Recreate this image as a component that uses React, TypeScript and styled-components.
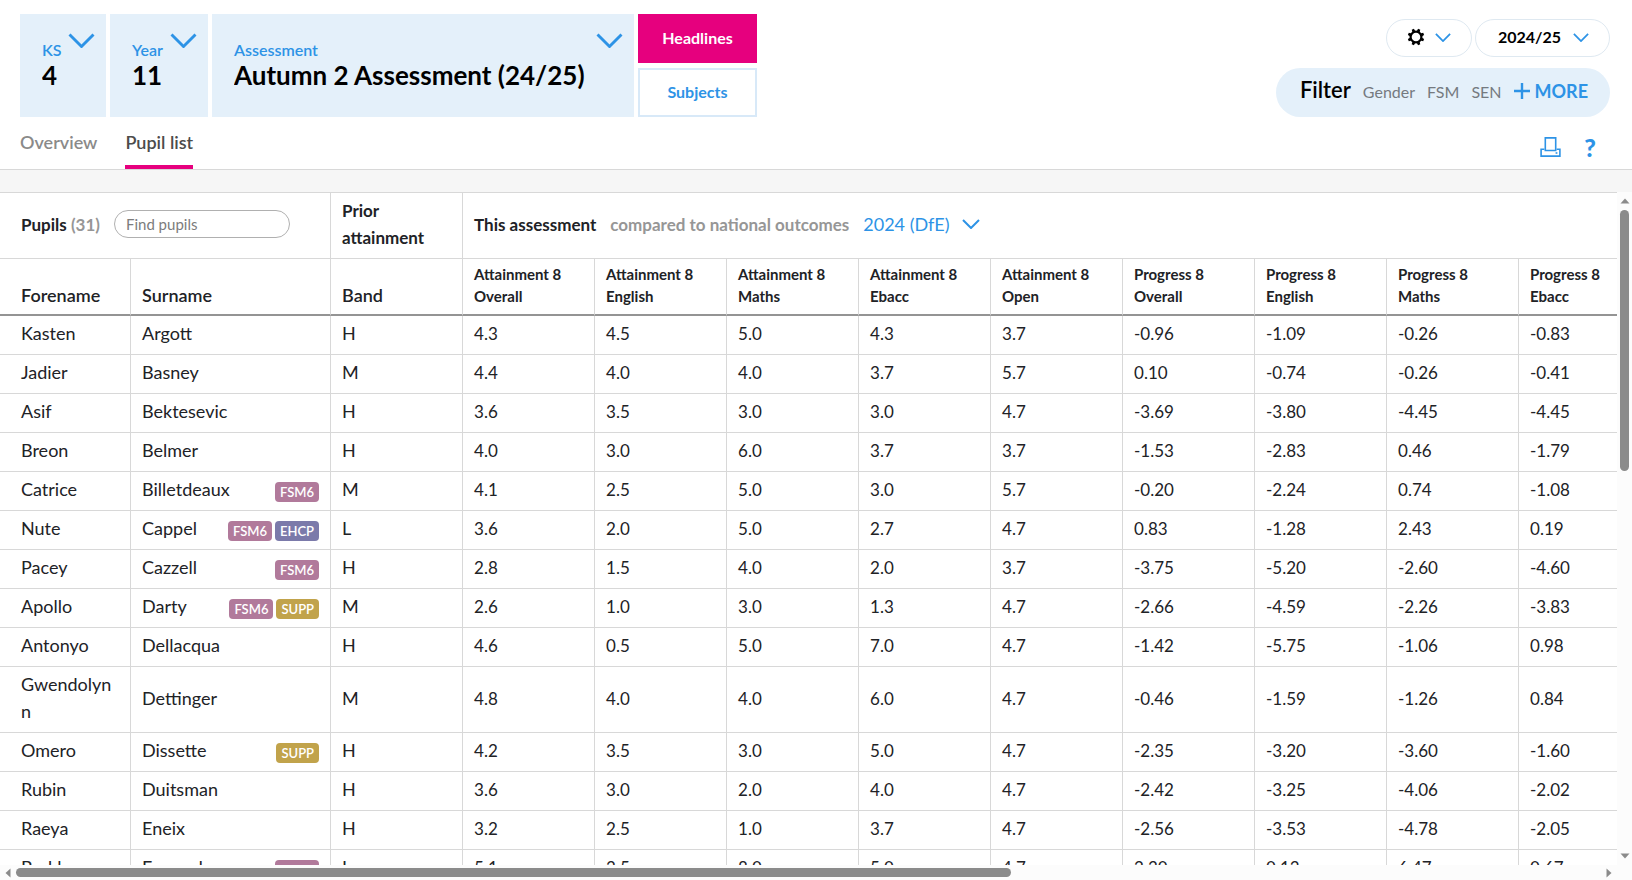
import React from 'react';
import styled, { createGlobalStyle } from 'styled-components';

const color = {
  blue: '#2d93e6',
  paleBlue: '#e4f0fa',
  pink: '#e6007e',
  text: '#212226',
  muted: '#969696',
  line: '#d8d8d8',
  scroll: '#8b8b8b',
};

const GlobalStyle = createGlobalStyle`
  *, *::before, *::after { box-sizing: border-box; }
  body { margin: 0; background: #fff; }
  body, button, input, select {
    font-family: Lato, "Liberation Sans", sans-serif;
    color: ${color.text};
  }
  button { cursor: pointer; }
`;

const Page = styled.div`
  display: flex;
  flex-direction: column;
  height: 100vh;
  overflow: hidden;
`;

const Header = styled.header`
  padding: 14px 22px 0 20px;
  border-bottom: 1px solid ${color.line};
`;

const TopRow = styled.div`
  display: flex;
  justify-content: space-between;
  align-items: stretch;
`;

const Pickers = styled.div`
  display: flex;
  gap: 4px;
`;

const PickerPanel = styled.label<{ $minWidth: number }>`
  display: flex;
  justify-content: space-between;
  gap: 6px;
  min-width: ${p => p.$minWidth}px;
  min-height: 103px;
  padding: 0 11px 0 22px;
  background: ${color.paleBlue};
  cursor: pointer;
  > svg { margin-top: 19px; }
`;

const PickerText = styled.span`
  display: flex;
  flex-direction: column;
  align-items: flex-start;
  padding-top: 26px;
`;

const PickerLabel = styled.span`
  font-size: 16px;
  font-weight: 600;
  line-height: 20px;
  color: ${color.blue};
`;

const PickerSelect = styled.select`
  appearance: none;
  margin: 0;
  padding: 0;
  border: 0;
  background: none;
  font-size: 26px;
  font-weight: 700;
  line-height: 30px;
  color: #000;
`;

const ViewSwitch = styled.div`
  display: flex;
  flex-direction: column;
  gap: 5px;
  width: 119px;
`;

const ViewButton = styled.button<{ $active?: boolean }>`
  flex: 1;
  padding: 0 6px 2px;
  border: 2px solid ${p => (p.$active ? color.pink : '#d8e9f8')};
  background: ${p => (p.$active ? color.pink : '#fff')};
  color: ${p => (p.$active ? '#fff' : color.blue)};
  font-size: 16px;
  font-weight: 700;
`;

const Tools = styled.div`
  display: flex;
  flex-direction: column;
  align-items: flex-end;
  justify-content: space-between;
  padding-top: 5px;
`;

const PillRow = styled.div`
  display: flex;
  gap: 3px;
`;

const pill = `
  display: flex;
  align-items: center;
  height: 38px;
  border: 1px solid #dfe9f1;
  border-radius: 19px;
  background: #fff;
`;

const SettingsButton = styled.button`
  ${pill}
  gap: 10px;
  padding: 0 20px 2px;
`;

const YearPill = styled.label`
  ${pill}
  gap: 11px;
  padding: 0 20px 2px 22px;
  cursor: pointer;
`;

const YearSelect = styled.select`
  appearance: none;
  margin: 0;
  padding: 0;
  border: 0;
  background: none;
  font-size: 16px;
  font-weight: 700;
  line-height: 20px;
  color: #000;
`;

const FilterBar = styled.div`
  display: flex;
  align-items: baseline;
  gap: 12px;
  height: 49px;
  padding: 7px 22px 0 24px;
  border-radius: 25px;
  background: ${color.paleBlue};
`;

const FilterTitle = styled.span`
  font-size: 22px;
  font-weight: 600;
  line-height: 30px;
  color: #000;
`;

const FilterOption = styled.button`
  padding: 0;
  border: 0;
  background: none;
  font-size: 16px;
  color: #757a80;
`;

const MoreButton = styled.button`
  display: flex;
  align-items: baseline;
  gap: 5px;
  padding: 0;
  border: 0;
  background: none;
  font-size: 18px;
  font-weight: 700;
  color: ${color.blue};
`;

const TabRow = styled.div`
  display: flex;
  justify-content: space-between;
  align-items: flex-end;
`;

const Tabs = styled.nav`
  display: flex;
  gap: 28px;
`;

const Tab = styled.a<{ $active?: boolean }>`
  padding: 13px 0 11px;
  border-bottom: 4px solid ${p => (p.$active ? color.pink : 'transparent')};
  font-size: 18px;
  font-weight: 600;
  line-height: 24px;
  color: ${p => (p.$active ? '#4c4c4c' : '#8a8a8a')};
  text-decoration: none;
`;

const PageActions = styled.div`
  display: flex;
  align-items: center;
  gap: 23px;
  padding: 0 14px 10px 0;
`;

const IconButton = styled.button`
  display: flex;
  padding: 0;
  border: 0;
  background: none;
  font-size: 25px;
  font-weight: 900;
  line-height: 24px;
  color: ${color.blue};
`;

const Band = styled.div`
  flex: none;
  height: 22px;
  background: #f6f6f6;
`;

const ScrollPanel = styled.main`
  flex: 1;
  min-height: 0;
  display: grid;
  grid-template-columns: minmax(0, 1fr) 15px;
  grid-template-rows: minmax(0, 1fr) 15px;
  background: #fcfcfc;
`;

const TableViewport = styled.div`
  overflow: auto;
  scrollbar-width: none;
  border-top: 1px solid ${color.line};
  background: #fff;
`;

const Track = styled.div<{ $vertical?: boolean }>`
  display: flex;
  flex-direction: ${p => (p.$vertical ? 'column' : 'row')};
  align-items: center;
`;

const TrackRun = styled.div<{ $vertical?: boolean }>`
  flex: 1;
  align-self: stretch;
  display: flex;
  flex-direction: ${p => (p.$vertical ? 'column' : 'row')};
  align-items: center;
`;

const Thumb = styled.div<{ $vertical?: boolean; $share: number }>`
  width: ${p => (p.$vertical ? '9px' : `${p.$share}%`)};
  height: ${p => (p.$vertical ? `${p.$share}%` : '9px')};
  border-radius: 5px;
  background: ${color.scroll};
`;

const ArrowBox = styled.span<{ $length: number }>`
  flex: none;
  display: flex;
  align-items: center;
  justify-content: center;
  width: ${p => p.$length}px;
  height: ${p => p.$length}px;
`;

const Grid = styled.table`
  width: 1651px;
  table-layout: fixed;
  border-collapse: separate;
  border-spacing: 0;
  font-size: 18px;
  line-height: 27px;
`;

const Col = styled.col<{ $width: number }>`
  width: ${p => p.$width}px;
`;

const GroupCell = styled.th`
  padding: 4px 11px 7px;
  border-right: 1px solid ${color.line};
  border-bottom: 1px solid ${color.line};
  font-size: 17px;
  font-weight: 700;
  text-align: left;
  vertical-align: middle;
  &:first-child { padding-left: 21px; }
`;

const GroupContent = styled.div`
  display: flex;
  align-items: center;
  gap: 14px;
`;

const Muted = styled.span`
  color: ${color.muted};
`;

const SearchInput = styled.input`
  width: 176px;
  height: 28px;
  padding: 0 11px;
  border: 1px solid #b0b0b0;
  border-radius: 14px;
  background: #fff;
  font-size: 15px;
  &::placeholder { color: #7c7c7c; opacity: 1; }
`;

const OutcomePicker = styled.label`
  display: flex;
  align-items: center;
  gap: 12px;
  cursor: pointer;
`;

const OutcomeSelect = styled.select`
  appearance: none;
  margin: 0;
  padding: 0;
  border: 0;
  background: none;
  font-size: 18px;
  line-height: 27px;
  color: ${color.blue};
`;

const HeadCell = styled.th<{ $small?: boolean }>`
  padding: 4px 11px ${p => (p.$small ? 7 : 8)}px;
  border-right: 1px solid ${color.line};
  border-bottom: 2px solid #949494;
  font-size: ${p => (p.$small ? 15 : 18)}px;
  font-weight: ${p => (p.$small ? 700 : 600)};
  line-height: 22px;
  text-align: left;
  vertical-align: bottom;
  &:first-child { padding-left: 21px; }
`;

const Cell = styled.td`
  padding: 4px 11px 7px;
  border-right: 1px solid ${color.line};
  border-bottom: 1px solid ${color.line};
  vertical-align: middle;
  overflow-wrap: anywhere;
  &:first-child { padding: 4px 14px 7px 21px; }
`;

const ScoreCell = styled(Cell)`
  font-size: 17px;
`;

const NameLine = styled.div`
  display: flex;
  justify-content: space-between;
  align-items: flex-end;
`;

const Chips = styled.span`
  display: flex;
  gap: 3px;
  padding-bottom: 1px;
`;

type ChipKind = 'FSM6' | 'EHCP' | 'SUPP';
const chipColor: Record<ChipKind, string> = { FSM6: '#b17a9b', EHCP: '#7b7aaa', SUPP: '#c1a34b' };

const Chip = styled.span<{ $kind: ChipKind }>`
  height: 20px;
  padding: 0 5px;
  border-radius: 4px;
  background: ${p => chipColor[p.$kind]};
  color: #fff;
  font-size: 13px;
  font-weight: 600;
  line-height: 20px;
`;

const Chevron = ({ size = 16, stroke = 2 }: { size?: number; stroke?: number }) => (
  <svg width={size} height={Math.round((size * 5) / 9)} viewBox="0 0 18 10" fill="none" aria-hidden="true">
    <path d="M1 1l8 8 8-8" stroke={color.blue} strokeWidth={stroke} />
  </svg>
);

const GearIcon = () => (
  <svg width="18" height="18" viewBox="0 0 18 18" fill="none" stroke="#000" aria-hidden="true">
    <circle cx="9" cy="9" r="5.4" strokeWidth="2.2" />
    {[22.5, 67.5, 112.5, 157.5, 202.5, 247.5, 292.5, 337.5].map(a => (
      <path key={a} d="M7.4 3.6L7.8 .7h2.4l.4 2.9z" fill="#000" stroke="none" transform={`rotate(${a} 9 9)`} />
    ))}
  </svg>
);

const PlusIcon = () => (
  <svg width="16" height="14" viewBox="0 0 16 14" overflow="visible" stroke={color.blue} strokeWidth="2.4" aria-hidden="true">
    <path d="M8 -1v16M0 7h16" />
  </svg>
);

const PrinterIcon = () => (
  <svg width="21" height="20" viewBox="0 0 21 20" fill="none" stroke={color.blue} strokeWidth="1.6" aria-hidden="true">
    <path d="M5.3 .9h10.4v12.6H5.3z" />
    <path d="M4.4 12.2H1.1v6.9h18.8v-6.9h-3.3" />
    <path d="M15.6 16h1.8" />
  </svg>
);

const Arrow = ({ turn, length }: { turn: number; length: number }) => (
  <ArrowBox $length={length}>
    <svg width="10" height="10" viewBox="0 0 10 10" aria-hidden="true">
      <path d="M5 2.5L9.5 7.5h-9z" fill={color.scroll} transform={`rotate(${turn} 5 5)`} />
    </svg>
  </ArrowBox>
);

const Picker = ({ label, value, minWidth }: { label: string; value: string; minWidth: number }) => (
  <PickerPanel $minWidth={minWidth}>
    <PickerText>
      <PickerLabel>{label}</PickerLabel>
      <PickerSelect defaultValue={value}>
        <option>{value}</option>
      </PickerSelect>
    </PickerText>
    <Chevron size={27} stroke={1.9} />
  </PickerPanel>
);

const scoreColumns = [
  ['Attainment 8', 'Overall'],
  ['Attainment 8', 'English'],
  ['Attainment 8', 'Maths'],
  ['Attainment 8', 'Ebacc'],
  ['Attainment 8', 'Open'],
  ['Progress 8', 'Overall'],
  ['Progress 8', 'English'],
  ['Progress 8', 'Maths'],
  ['Progress 8', 'Ebacc'],
];

type Pupil = [forename: string, surname: string, chips: ChipKind[], band: string, scores: string];

const pupils: Pupil[] = [
  ['Kasten', 'Argott', [], 'H', '4.3 4.5 5.0 4.3 3.7 -0.96 -1.09 -0.26 -0.83'],
  ['Jadier', 'Basney', [], 'M', '4.4 4.0 4.0 3.7 5.7 0.10 -0.74 -0.26 -0.41'],
  ['Asif', 'Bektesevic', [], 'H', '3.6 3.5 3.0 3.0 4.7 -3.69 -3.80 -4.45 -4.45'],
  ['Breon', 'Belmer', [], 'H', '4.0 3.0 6.0 3.7 3.7 -1.53 -2.83 0.46 -1.79'],
  ['Catrice', 'Billetdeaux', ['FSM6'], 'M', '4.1 2.5 5.0 3.0 5.7 -0.20 -2.24 0.74 -1.08'],
  ['Nute', 'Cappel', ['FSM6', 'EHCP'], 'L', '3.6 2.0 5.0 2.7 4.7 0.83 -1.28 2.43 0.19'],
  ['Pacey', 'Cazzell', ['FSM6'], 'H', '2.8 1.5 4.0 2.0 3.7 -3.75 -5.20 -2.60 -4.60'],
  ['Apollo', 'Darty', ['FSM6', 'SUPP'], 'M', '2.6 1.0 3.0 1.3 4.7 -2.66 -4.59 -2.26 -3.83'],
  ['Antonyo', 'Dellacqua', [], 'H', '4.6 0.5 5.0 7.0 4.7 -1.42 -5.75 -1.06 0.98'],
  ['Gwendolynn', 'Dettinger', [], 'M', '4.8 4.0 4.0 6.0 4.7 -0.46 -1.59 -1.26 0.84'],
  ['Omero', 'Dissette', ['SUPP'], 'H', '4.2 3.5 3.0 5.0 4.7 -2.35 -3.20 -3.60 -1.60'],
  ['Rubin', 'Duitsman', [], 'H', '3.6 3.0 2.0 4.0 4.7 -2.42 -3.25 -4.06 -2.02'],
  ['Raeya', 'Eneix', [], 'H', '3.2 2.5 1.0 3.7 4.7 -2.56 -3.53 -4.78 -2.05'],
  ['Barkley', 'Ferrand', ['FSM6'], 'L', '5.1 3.5 8.0 5.0 4.7 2.30 0.13 6.47 0.67'],
];

export default function App() {
  return (
    <>
      <GlobalStyle />
      <Page>
        <Header>
          <TopRow>
            <Pickers>
              <Picker label="KS" value="4" minWidth={86} />
              <Picker label="Year" value="11" minWidth={98} />
              <Picker label="Assessment" value="Autumn 2 Assessment (24/25)" minWidth={422} />
              <ViewSwitch>
                <ViewButton type="button" $active>Headlines</ViewButton>
                <ViewButton type="button">Subjects</ViewButton>
              </ViewSwitch>
            </Pickers>
            <Tools>
              <PillRow>
                <SettingsButton type="button" aria-label="Settings">
                  <GearIcon />
                  <Chevron />
                </SettingsButton>
                <YearPill>
                  <YearSelect aria-label="Academic year" defaultValue="2024/25">
                    <option>2024/25</option>
                  </YearSelect>
                  <Chevron />
                </YearPill>
              </PillRow>
              <FilterBar>
                <FilterTitle>Filter</FilterTitle>
                <FilterOption type="button">Gender</FilterOption>
                <FilterOption type="button">FSM</FilterOption>
                <FilterOption type="button">SEN</FilterOption>
                <MoreButton type="button">
                  <PlusIcon />
                  MORE
                </MoreButton>
              </FilterBar>
            </Tools>
          </TopRow>
          <TabRow>
            <Tabs>
              <Tab href="#overview">Overview</Tab>
              <Tab href="#pupils" $active aria-current="page">Pupil list</Tab>
            </Tabs>
            <PageActions>
              <IconButton type="button" aria-label="Print">
                <PrinterIcon />
              </IconButton>
              <IconButton type="button" aria-label="Help">?</IconButton>
            </PageActions>
          </TabRow>
        </Header>
        <Band />
        <ScrollPanel>
          <TableViewport>
            <Grid>
              <colgroup>
                <Col $width={131} />
                <Col $width={200} />
                <Col $width={132} />
                {scoreColumns.map(c => (
                  <Col key={c.join()} $width={132} />
                ))}
              </colgroup>
              <thead>
                <tr>
                  <GroupCell colSpan={2}>
                    <GroupContent>
                      <span>
                        Pupils <Muted>(31)</Muted>
                      </span>
                      <SearchInput type="search" aria-label="Find pupils" placeholder="Find pupils" />
                    </GroupContent>
                  </GroupCell>
                  <GroupCell>Prior attainment</GroupCell>
                  <GroupCell colSpan={scoreColumns.length}>
                    <GroupContent>
                      <span>This assessment</span>
                      <Muted>compared to national outcomes</Muted>
                      <OutcomePicker>
                        <OutcomeSelect aria-label="National outcomes" defaultValue="2024 (DfE)">
                          <option>2024 (DfE)</option>
                        </OutcomeSelect>
                        <Chevron size={18} />
                      </OutcomePicker>
                    </GroupContent>
                  </GroupCell>
                </tr>
                <tr>
                  <HeadCell>Forename</HeadCell>
                  <HeadCell>Surname</HeadCell>
                  <HeadCell>Band</HeadCell>
                  {scoreColumns.map(([measure, subject]) => (
                    <HeadCell key={measure + subject} $small>
                      {measure}
                      <br />
                      {subject}
                    </HeadCell>
                  ))}
                </tr>
              </thead>
              <tbody>
                {pupils.map(([forename, surname, chips, band, scores]) => (
                  <tr key={forename}>
                    <Cell>{forename}</Cell>
                    <Cell>
                      <NameLine>
                        {surname}
                        <Chips>
                          {chips.map(kind => (
                            <Chip key={kind} $kind={kind}>{kind}</Chip>
                          ))}
                        </Chips>
                      </NameLine>
                    </Cell>
                    <Cell>{band}</Cell>
                    {scores.split(' ').map((score, i) => (
                      <ScoreCell key={i}>{score}</ScoreCell>
                    ))}
                  </tr>
                ))}
              </tbody>
            </Grid>
          </TableViewport>
          <Track $vertical>
            <Arrow turn={0} length={18} />
            <TrackRun $vertical>
              <Thumb $vertical $share={41} />
            </TrackRun>
            <Arrow turn={180} length={18} />
          </Track>
          <Track>
            <Arrow turn={-90} length={16} />
            <TrackRun>
              <Thumb $share={62.8} />
            </TrackRun>
            <Arrow turn={90} length={16} />
          </Track>
        </ScrollPanel>
      </Page>
    </>
  );
}
